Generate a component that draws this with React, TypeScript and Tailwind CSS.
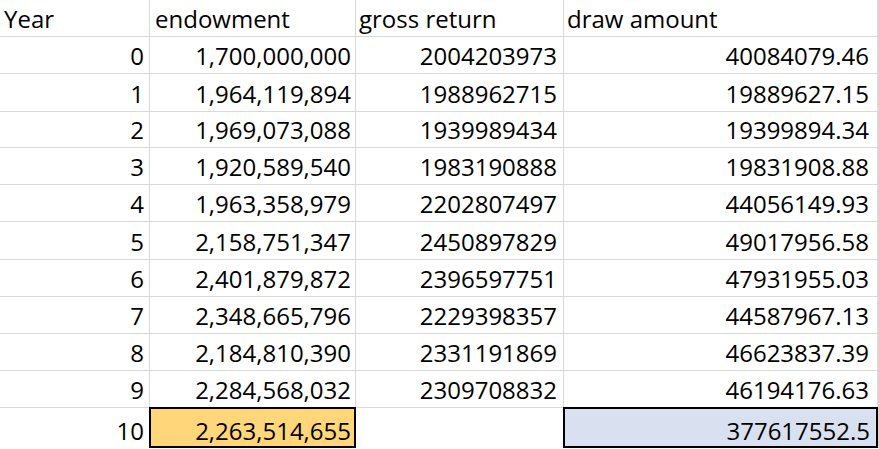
const rows = [
  { year: "0", endowment: "1,700,000,000", gross: "2004203973", draw: "40084079.46", h: "h-[37px]" },
  { year: "1", endowment: "1,964,119,894", gross: "1988962715", draw: "19889627.15", h: "h-[38px]" },
  { year: "2", endowment: "1,969,073,088", gross: "1939989434", draw: "19399894.34", h: "h-[36px]" },
  { year: "3", endowment: "1,920,589,540", gross: "1983190888", draw: "19831908.88", h: "h-[37px]" },
  { year: "4", endowment: "1,963,358,979", gross: "2202807497", draw: "44056149.93", h: "h-[37px]" },
  { year: "5", endowment: "2,158,751,347", gross: "2450897829", draw: "49017956.58", h: "h-[38px]" },
  { year: "6", endowment: "2,401,879,872", gross: "2396597751", draw: "47931955.03", h: "h-[37px]" },
  { year: "7", endowment: "2,348,665,796", gross: "2229398357", draw: "44587967.13", h: "h-[37px]" },
  { year: "8", endowment: "2,184,810,390", gross: "2331191869", draw: "46623837.39", h: "h-[37px]" },
  { year: "9", endowment: "2,284,568,032", gross: "2309708832", draw: "46194176.63", h: "h-[37px]" },
]

const cell = "flex items-end border-r border-b border-[#d9d9d9] pb-[5px] leading-[24px]"

function Selected({ children, fill }: { children: React.ReactNode; fill: string }) {
  return (
    <div className={`relative flex items-end justify-end pb-[5px] leading-[24px] ${fill}`}>
      {children}
      <div className="pointer-events-none absolute -left-px -top-px right-0 bottom-0 border-2 border-black" />
    </div>
  )
}

export default function App() {
  return (
    <div
      className="h-[449px] w-[879px] overflow-hidden bg-white text-[24px] text-black"
      style={{ fontFamily: '"Open Sans", "Liberation Sans", sans-serif' }}
    >
      <div className="grid grid-cols-[150px_206px_208px_314px_1fr]">
        <div className={`${cell} h-[37px] pl-[4px]`}>Year</div>
        <div className={`${cell} h-[37px] pl-[5px]`}>endowment</div>
        <div className={`${cell} h-[37px] pl-[3px]`}>gross return</div>
        <div className={`${cell} h-[37px] pl-[3px]`}>draw amount</div>
        <div className={`${cell} h-[37px]`} />

        {rows.map((r) => (
          <div key={r.year} className="contents">
            <div className={`${cell} ${r.h} justify-end pr-[5px]`}>{r.year}</div>
            <div className={`${cell} ${r.h} justify-end pr-[4px]`}>{r.endowment}</div>
            <div className={`${cell} ${r.h} justify-end pr-[6px]`}>{r.gross}</div>
            <div className={`${cell} ${r.h} justify-end pr-[8px]`}>{r.draw}</div>
            <div className={`${cell} ${r.h}`} />
          </div>
        ))}

        <div className={`${cell} h-[40px] justify-end border-b-0 pr-[5px]`}>10</div>
        <Selected fill="bg-[#ffd67a] pr-[5px]">2,263,514,655</Selected>
        <div className={`${cell} h-[40px] border-b-0`} />
        <Selected fill="bg-[#d9e0f0] pr-[8px]">377617552.5</Selected>
        <div className="h-[40px] bg-[#c6e4bd]" />
      </div>
    </div>
  )
}
